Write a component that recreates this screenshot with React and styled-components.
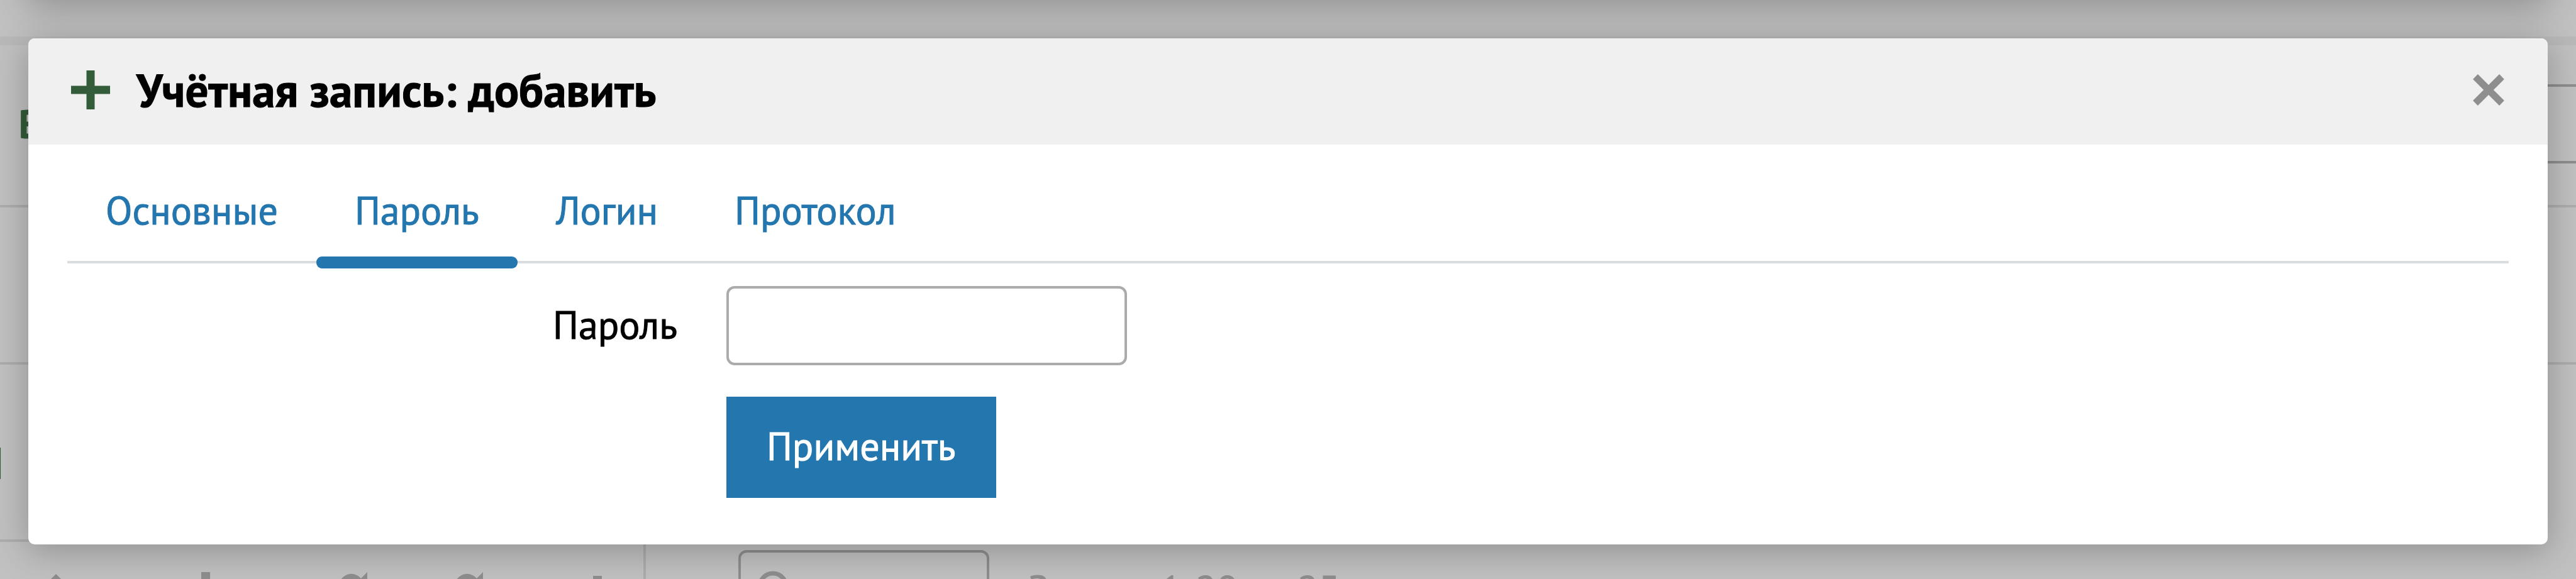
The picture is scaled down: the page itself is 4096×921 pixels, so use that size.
import React, { useState } from "react";
import styled, { createGlobalStyle } from "styled-components";

const color = {
  shade: "#c1c1c1",
  shadeStrip: "#b9b9b9",
  shadeLine: "#adadad",
  muted: "#8e8e8e",
  green: "#335d3a",
  blue: "#2476ae",
  header: "#f0f0f0",
  line: "#dadde0",
  border: "#ababab",
};

const shadow = "0 10px 56px 2px rgba(0, 0, 0, 0.25)";

const GlobalStyle = createGlobalStyle`
  *, *::before, *::after { box-sizing: border-box; }
  body {
    margin: 0;
    background: ${color.shade};
    color: #000;
    font-family: "PT Sans", "Noto Sans", sans-serif;
    font-size: 62px;
    line-height: 80px;
    -webkit-text-stroke: 1px;
  }
  button, input { font: inherit; color: inherit; -webkit-text-stroke: inherit; }
`;

const Screen = styled.div`
  position: relative;
  height: 100vh;
  overflow: hidden;
`;

/* Dimmed page under the dialog */

const Page = styled.div`
  display: flex;
  flex-direction: column;
`;

const PreviousDialog = styled.div`
  height: 300px;
  margin: -300px 45px 0;
  border-radius: 10px;
  background: #fff;
  box-shadow: ${shadow};
`;

const TopSpace = styled.div`
  height: 58px;
`;

const Strip = styled.div`
  height: 14px;
  background: ${color.shadeStrip};
`;

const FilterRow = styled.div`
  display: flex;
  align-items: flex-start;
  justify-content: space-between;
  height: ${(p) => p.$height}px;
  padding-top: ${(p) => p.$top}px;
  padding-left: 30px;
  border-bottom: 4px solid ${color.shadeLine};
`;

const GroupTitle = styled.strong`
  padding-top: 22px;
  color: ${color.green};
`;

const FilterInput = styled.input`
  width: 640px;
  height: 126px;
  border: 4px solid ${color.muted};
  border-right: 0;
  border-radius: 13px 0 0 13px;
  background: transparent;
`;

const Section = styled.section`
  display: flex;
  align-items: center;
  height: 278px;
  padding-top: 32px;
`;

const SectionTitle = styled.h2`
  margin: 0 0 0 -40px;
  font-size: 70px;
  line-height: 80px;
  color: ${color.green};
`;

const Footer = styled.footer`
  display: flex;
  color: ${color.muted};
`;

const Pager = styled.div`
  display: flex;
  align-items: flex-start;
  width: 1027px;
  height: 160px;
  padding: 48px 0 0 58px;
  gap: 176px;
  border-top: 4px solid ${color.shadeLine};
  border-right: 4px solid ${color.shadeLine};
`;

const PagerGroup = styled.div`
  display: flex;
  gap: 122px;
`;

const PagerIcon = styled.svg`
  width: 62px;
  height: 62px;
  fill: currentColor;
`;

const Results = styled.div`
  display: flex;
  align-items: flex-start;
  gap: 62px;
  padding: 17px 0 0 147px;
`;

const SearchBox = styled.label`
  display: flex;
  align-items: flex-start;
  width: 399px;
  height: 126px;
  padding: 29px 26px;
  border: 4px solid ${color.muted};
  border-radius: 13px;
`;

const SearchIcon = styled.svg`
  flex: none;
  width: 62px;
  height: 62px;
  fill: none;
  stroke: currentColor;
  stroke-width: 7;
`;

const SearchInput = styled.input`
  width: 100%;
  border: 0;
  background: transparent;
`;

const Count = styled.span`
  padding-top: 22px;
  white-space: nowrap;
`;

/* Dialog */

const DialogLayer = styled.div`
  position: absolute;
  top: 61px;
  right: 45px;
  left: 45px;
`;

const Dialog = styled.section`
  overflow: hidden;
  border-radius: 10px;
  background: #fff;
  box-shadow: ${shadow};
`;

const DialogHeader = styled.header`
  display: flex;
  align-items: center;
  height: 169px;
  padding: 0 68px 5px;
  background: ${color.header};
`;

const PlusIcon = styled.svg`
  width: 62px;
  height: 62px;
  stroke: ${color.green};
  stroke-width: 13;
`;

const DialogTitle = styled.h1`
  flex: 1;
  margin: 0 0 0 42px;
  font-size: 73px;
  line-height: 92px;
`;

const CloseButton = styled.button`
  display: flex;
  padding: 0;
  border: 0;
  background: none;
  color: ${color.muted};
  cursor: pointer;
`;

const CloseIcon = styled.svg`
  width: 52px;
  height: 52px;
  stroke: currentColor;
  stroke-width: 11;
`;

const DialogBody = styled.div`
  padding: 61px 62px 74px;
`;

const Tabs = styled.nav`
  display: flex;
  height: 128px;
  border-bottom: 4px solid ${color.line};
`;

const Tab = styled.button`
  position: relative;
  height: 86px;
  padding: 0 61px;
  border: 0;
  background: none;
  color: ${color.blue};
  cursor: pointer;

  &[aria-selected="true"]::after {
    content: "";
    position: absolute;
    right: 0;
    bottom: -50px;
    left: 0;
    height: 19px;
    border-radius: 9px;
    background: ${color.blue};
  }
`;

const Form = styled.form`
  display: grid;
  grid-template-columns: 970px 637px;
  column-gap: 78px;
  row-gap: 50px;
  align-items: center;
  padding-top: 36px;
`;

const Label = styled.label`
  padding-bottom: 5px;
  text-align: right;
`;

const PasswordInput = styled.input`
  width: 100%;
  height: 126px;
  padding: 0 28px;
  border: 4px solid ${color.border};
  border-radius: 13px;
  background: #fff;
`;

const SubmitButton = styled.button`
  grid-column: 2;
  justify-self: start;
  height: 161px;
  padding: 0 64px 5px;
  border: 0;
  background: ${color.blue};
  color: #fff;
  cursor: pointer;
`;

const shapes = {
  up: "M31 3 60 32 52 40 37 25V62H25V25L10 40 2 32Z",
  down: "M24 0H38V32L50 20 60 30 31 59 2 30 12 20 24 32Z",
  refresh: "M50 0V25H25L34 16A11 11 0 1 0 35 28H44A20 20 0 1 1 40 10Z",
  add: "M41 6H55V24H62V38H55V56H41V38H20V24H41Z",
};

function Icon({ name }) {
  return (
    <PagerIcon viewBox="0 0 62 62" aria-hidden="true">
      <path d={shapes[name]} />
    </PagerIcon>
  );
}

const tabs = ["Основные", "Пароль", "Логин", "Протокол"];

export default function App() {
  const [active, setActive] = useState("Пароль");
  return (
    <Screen>
      <GlobalStyle />
      <Page>
        <PreviousDialog />
        <TopSpace />
        <Strip />
        <FilterRow $height={258} $top={62}>
          <GroupTitle>В</GroupTitle>
          <FilterInput aria-label="Фильтр" />
        </FilterRow>
        <FilterRow $height={250} $top={0} />
        <Section>
          <SectionTitle>П</SectionTitle>
        </Section>
        <Footer>
          <Pager>
            <Icon name="up" />
            <Icon name="down" />
            <PagerGroup>
              <Icon name="refresh" />
              <Icon name="refresh" />
              <Icon name="add" />
            </PagerGroup>
          </Pager>
          <Results>
            <SearchBox>
              <SearchIcon viewBox="0 0 62 62" aria-hidden="true">
                <circle cx="25" cy="25" r="21" />
                <path d="M40 40 58 58" />
              </SearchIcon>
              <SearchInput aria-label="Поиск" />
            </SearchBox>
            <Count>Записи 1-20 из 25</Count>
          </Results>
        </Footer>
      </Page>

      <DialogLayer>
        <Dialog role="dialog" aria-labelledby="dialog-title">
          <DialogHeader>
            <PlusIcon viewBox="0 0 62 62" aria-hidden="true">
              <path d="M31 0V62M0 31H62" />
            </PlusIcon>
            <DialogTitle id="dialog-title">Учётная запись: добавить</DialogTitle>
            <CloseButton type="button" aria-label="Закрыть">
              <CloseIcon viewBox="0 0 52 52">
                <path d="M5 5 47 47M47 5 5 47" />
              </CloseIcon>
            </CloseButton>
          </DialogHeader>
          <DialogBody>
            <Tabs role="tablist">
              {tabs.map((t) => (
                <Tab key={t} type="button" role="tab" aria-selected={t === active} onClick={() => setActive(t)}>
                  {t}
                </Tab>
              ))}
            </Tabs>
            <Form onSubmit={(e) => e.preventDefault()}>
              <Label htmlFor="password">Пароль</Label>
              <PasswordInput id="password" type="password" />
              <SubmitButton type="submit">Применить</SubmitButton>
            </Form>
          </DialogBody>
        </Dialog>
      </DialogLayer>
    </Screen>
  );
}
